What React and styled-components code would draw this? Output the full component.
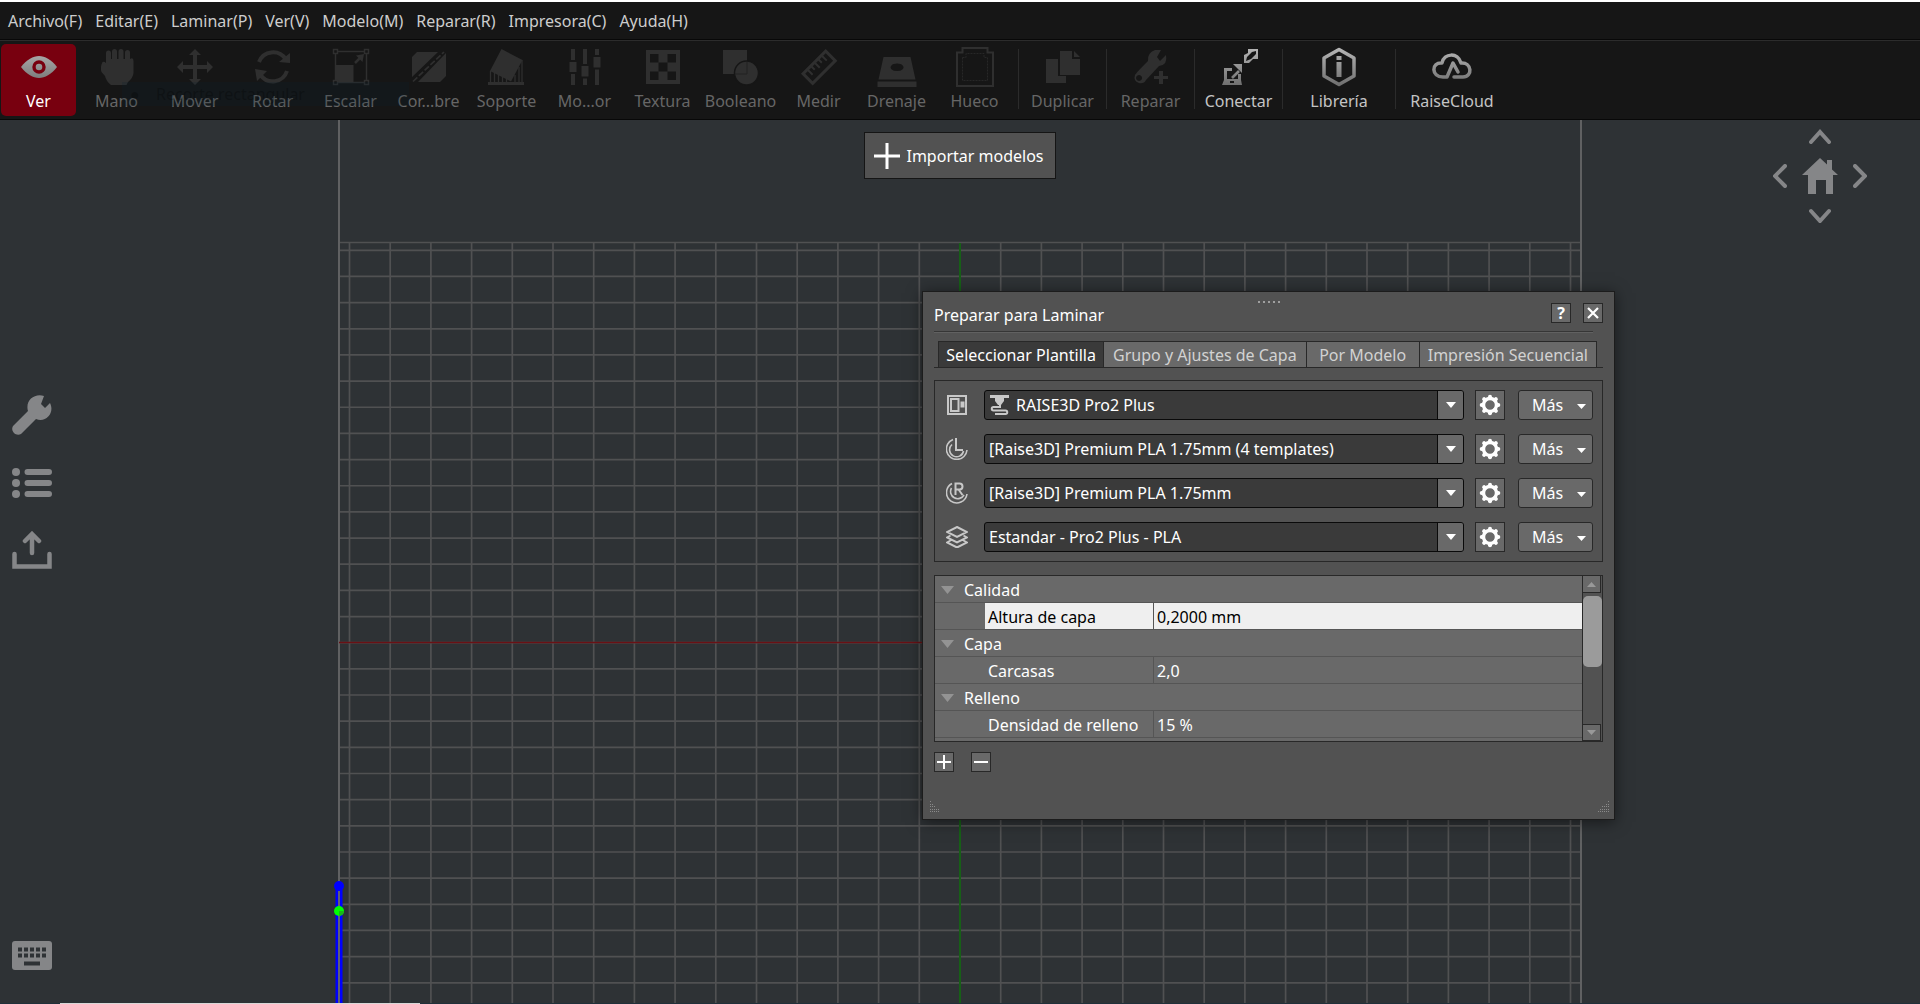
import React, { useState } from 'react';
import styled, { createGlobalStyle } from 'styled-components';

const MENU = ['Archivo(F)', 'Editar(E)', 'Laminar(P)', 'Ver(V)', 'Modelo(M)', 'Reparar(R)', 'Impresora(C)', 'Ayuda(H)'];

const TOOLS = [
  { id: 'view', label: 'Ver' },
  { id: 'pan', label: 'Mano', disabled: true },
  { id: 'move', label: 'Mover', disabled: true },
  { id: 'rotate', label: 'Rotar', disabled: true },
  { id: 'scale', label: 'Escalar', disabled: true },
  { id: 'cut', label: 'Cor...bre', disabled: true },
  { id: 'support', label: 'Soporte', disabled: true },
  { id: 'modifier', label: 'Mo...or', disabled: true },
  { id: 'texture', label: 'Textura', disabled: true },
  { id: 'boolean', label: 'Booleano', disabled: true },
  { id: 'measure', label: 'Medir', disabled: true },
  { id: 'drain', label: 'Drenaje', disabled: true },
  { id: 'hollow', label: 'Hueco', disabled: true },
  { id: 'duplicate', label: 'Duplicar', disabled: true, separated: true },
  { id: 'repair', label: 'Reparar', disabled: true, separated: true },
  { id: 'connect', label: 'Conectar', separated: true },
  { id: 'library', label: 'Librería', separated: true, wide: true },
  { id: 'cloud', label: 'RaiseCloud', separated: true, wide: true },
];

const TABS = [
  { label: 'Seleccionar Plantilla', width: 166 },
  { label: 'Grupo y Ajustes de Capa', width: 202 },
  { label: 'Por Modelo', width: 113 },
  { label: 'Impresión Secuencial', width: 177 },
];

const TEMPLATES = [
  { icon: 'printer', label: 'Impresora', value: 'RAISE3D Pro2 Plus' },
  { icon: 'left', label: 'Extrusor izquierdo', value: '[Raise3D] Premium PLA 1.75mm (4 templates)' },
  { icon: 'right', label: 'Extrusor derecho', value: '[Raise3D] Premium PLA 1.75mm' },
  { icon: 'layers', label: 'Plantilla', value: 'Estandar - Pro2 Plus - PLA' },
];

const SETTINGS = [
  { group: 'Calidad', name: 'Altura de capa', value: '0,2000 mm' },
  { group: 'Capa', name: 'Carcasas', value: '2,0' },
  { group: 'Relleno', name: 'Densidad de relleno', value: '15 %' },
];

// Toolbar icons are drawn around the origin in a 40x40 box
const toolIcons = {
  view: (
    <>
      <path d="M-18 0C-12-7.500-6-11 0-11S12-7.500 18 0C12 7.500 6 11 0 11S-12 7.500-18 0Z" />
      <circle r="5" fill="none" stroke="#78000f" strokeWidth="3.400" />
    </>
  ),
  pan: (
    <>
      <path d="M-8.500-14V0M-2.500-15.500V0M4-15.500V0M10.500-14.500V0" stroke="currentColor" strokeWidth="5" strokeLinecap="round" />
      <path d="M-11-8H13Q16.500-10 16.500-6V6Q16 11 11 15L9.500 18H-6Q-11 14-12 9L-15.500 5Q-17 0-14.500-5Q-13-6-11-4Z" />
    </>
  ),
  move: (
    <path d="M0-18L6-12H2V-2H12V-6L18 0L12 6V2H2V12H6L0 18L-6 12H-2V2H-12V6L-18 0L-12-6V-2H-2V-12H-6Z" />
  ),
  rotate: (
    <>
      <path d="M-14-5A15 15 0 0 1 12.500-8M14 4A15 15 0 0 1-12.500 8" fill="none" stroke="currentColor" strokeWidth="4" />
      <path d="M17-14V-4L6-5ZM-18 2L-6 4L-16 14Z" />
    </>
  ),
  scale: (
    <>
      <path d="M-15.500-15.500H15.500V15.500H-15.500Z" fill="none" stroke="currentColor" strokeWidth="1.500" />
      <path d="M-15-2H2.500V15H-15Z" />
      <path d="M4-4L11-11" stroke="currentColor" strokeWidth="2.500" />
      <path d="M13-13L11.500-5L5-11.500Z" />
      <path d="M-17.500-17.500h4v4h-4ZM13.500-17.500h4v4h-4ZM-17.500 13.500h4v4h-4ZM13.500 13.500h4v4h-4Z" fill="#161616" stroke="currentColor" strokeWidth="1.500" />
    </>
  ),
  cut: (
    <>
      <path d="M-12-15H9L-17 10V-10ZM17-9V9L11 15H-11L17-14Z" />
      <path d="M-16 14.500L15-15" stroke="currentColor" strokeWidth="1.700" strokeDasharray="6 2" />
    </>
  ),
  support: (
    <>
      <path d="M-5.500-18L15.500-7L4 14.500L-17 4Z" />
      <path d="M-19 15H17V18H-19Z" />
      <path d="M-16.500 4V16M-12.500 6V16M-8.500 8V16M-4.500 10V16M-.5 12V16M8 8V16M12 0V16M15-7V16" stroke="currentColor" strokeWidth="1.300" />
    </>
  ),
  modifier: (
    <path d="M-14-18h4V-7h-4ZM-15.500-5h7V5h-7ZM-14 7h4V18h-4ZM-2-18h4V-3h-4ZM-3.500-1h7V9.500h-7ZM-2 11.500h4V18h-4ZM10-18h4V-12h-4ZM8.500-10h7V.5h-7ZM10 2.500h4V18h-4Z" />
  ),
  texture: (
    <>
      <path d="M-17-17H17V17H-17Z" />
      <path d="M-13-13h8.500v8.500h-8.500ZM4.500-13h8.500v8.500h-8.500ZM-4.500-4.500h9v9h-9ZM-13 4.500h8.500v8.500h-8.500ZM4.500 4.500h8.500v8.500h-8.500Z" fill="#161616" />
    </>
  ),
  boolean: (
    <>
      <path d="M-18-17H6V7H-18Z" />
      <circle cx="5.500" cy="6" r="12" stroke="#161616" strokeWidth="1.500" />
      <path d="M6-5V7H-6" fill="none" stroke="#222" />
    </>
  ),
  measure: (
    <g transform="rotate(-45)" fill="none">
      <path d="M-16-6.500H16V7H-16Z" stroke="currentColor" strokeWidth="3" />
      <path d="M-10-6V1M-5-6V-1M0-6V1M5-6V-1M10-6V1" stroke="currentColor" strokeWidth="2" />
    </g>
  ),
  drain: (
    <>
      <path fillRule="evenodd" d="M-13.500-10H13.500L18.500 12.500H-18.500ZM0-3.500A6.500 3.800 0 1 0 .1-3.500Z" />
      <path d="M-19.500 14.500H19.500V20H-19.500Z" />
    </>
  ),
  hollow: (
    <g fill="none">
      <path d="M-18-14.500H-12.500V-19H12.500V-14.500H18V19H-18Z" stroke="currentColor" strokeWidth="2" />
      <path d="M-12.500-9.500H-9V-13.500H9V-9.500H12.500V13.500H-12.500Z" stroke="currentColor" strokeWidth=".7" strokeDasharray="2 1" />
    </g>
  ),
  duplicate: (
    <>
      <path d="M-17-8H-5V9H3V16H-17Z" />
      <path d="M-3-16H9V-8H17V8H-3ZM11-16L17-10H11Z" />
    </>
  ),
  repair: (
    <>
      <path fillRule="evenodd" d="M4-17L10-17L6-10L9-6L15-12Q17-2 8-1L-5 13Q-7 17-12 16Q-18 14-16 8Q-15 6-3-6Q-4-14 4-17ZM-12 8A3 3 0 1 0-11.900 8Z" />
      <path d="M8 4h4v5h5v3h-5v5H8v-5H3V9h5Z" />
    </>
  ),
  connect: (
    <>
      <path fillRule="evenodd" d="M-15 1H-7V4H-12V12H-1V7H2V13L3 18H-17L-15 13ZM-9 14V16H-5V14Z" />
      <path d="M-7 11L0 4" stroke="currentColor" strokeWidth="2.600" />
      <path d="M3-3V6L-6-3Z" />
      <path fillRule="evenodd" d="M9-18H19V-8H14L10-4H5V-12L9-14ZM17-16L13-15L8-10L7-6L12-8L17-13Z" />
    </>
  ),
  library: (
    <>
      <path d="M0-17.500L15-9V9L0 17.500L-15 9V-9Z" fill="none" stroke="currentColor" strokeWidth="3.500" strokeLinejoin="round" />
      <path d="M-2.500-11h5v4h-5ZM-2.500-5h5V10h-5Z" />
    </>
  ),
  cloud: (
    <path d="M-5 10H-9C-21 10-21-5-10-4C-8-14 6-15 9-4C20-5 21 10 11 10H2M-5 10L1-4L6 5" fill="none" stroke="currentColor" strokeWidth="3.500" strokeLinejoin="round" strokeLinecap="round" />
  ),
};

const slotIcons = {
  printer: (
    <>
      <path d="M2 2H20V20H2Z" />
      <path d="M5 5H12.500V17H5ZM15.500 8.500h2v4h-2Z" />
    </>
  ),
  left: (
    <>
      <path d="M7 1.500A10.300 10.300 0 1 0 21 12M6 6.500A7 7 0 1 0 17.500 13" strokeWidth="1.600" />
      <path d="M10 0V12H17" />
    </>
  ),
  right: (
    <>
      <path d="M6 1.500A10.300 10.300 0 1 0 21 12M5.500 6A7 7 0 1 0 18 13" strokeWidth="1.600" />
      <path d="M9.500 13V1.500H13.500A3 3 0 0 1 13.500 7.500H9.500M12.500 7.500L16.500 13" />
    </>
  ),
  layers: <path d="M11 1L21 6L11 11L1 6ZM4.500 9.500L1 11.500L11 16.500L21 11.500L17.500 9.500M4.500 14.500L1 16.500L11 21.500L21 16.500L17.500 14.500" />,
};

// Build plate seen from above: lines are laid out around its vertical axis
function BuildPlate() {
  const columns = Array.from({ length: 31 }, (_, i) => (i - 15) * 40.7);
  const rows = Array.from({ length: 40 }, (_, i) => 130.3 + i * 26.16);

  return (
    <Plate aria-hidden="true">
      <svg x="50%" overflow="visible">
        <g stroke="#505152" strokeWidth="1.700">
          {columns.map((x) => <path key={x} d={`M${x} 123V1600`} />)}
          {rows.map((y) => <path key={y} d={`M-621 ${y}H621`} />)}
          <path d="M-621 122.500H621" />
        </g>
        <path d="M-621 0V1600M621 0V1600" stroke="#606162" strokeWidth="2" />
        <path d="M0 123V1600" stroke="#175f17" strokeWidth="2" />
        <path d="M-621 522.500H0" stroke="#6a1014" strokeWidth="1.500" />
        <path d="M-621 766V1600" stroke="#00f" strokeWidth="7" />
        <path d="M-621 771V1600" stroke="#606175" strokeWidth="2" />
        <circle cx="-621" cy="766" r="5" fill="#00f" />
        <circle cx="-621" cy="791" r="5" fill="#0f0" />
        <path d="M-621 791h5a5 5 0 0 1-5 5Z" fill="#18b818" />
      </svg>
    </Plate>
  );
}

function Gear() {
  return (
    <svg width="22" height="22" viewBox="-11 -11 22 22" fill="none" stroke="#fff" aria-hidden="true">
      <circle r="6.500" strokeWidth="3.400" />
      {[0, 45, 90, 135, 180, 225, 270, 315].map((a) => (
        <path key={a} d="M0-7V-8.300" strokeWidth="4" strokeLinecap="round" transform={`rotate(${a})`} />
      ))}
    </svg>
  );
}

function Triangle({ width = 10, height = 6, up }) {
  return (
    <svg width={width} height={height} viewBox="0 0 10 6" preserveAspectRatio="none" fill="currentColor" aria-hidden="true">
      <path d={up ? 'M0 6L5 0L10 6Z' : 'M0 0H10L5 6Z'} />
    </svg>
  );
}

function App() {
  const [activeTool, setActiveTool] = useState('view');
  const [activeTab, setActiveTab] = useState(TABS[0].label);
  const [open, setOpen] = useState(true);

  return (
    <Window>
      <GlobalStyle />
      <svg width="0" height="0" aria-hidden="true">
        <linearGradient id="metal" gradientUnits="userSpaceOnUse" x1="0" x2="0" y1="-18" y2="18">
          <stop offset="0" stopColor="#b4b4b4" />
          <stop offset="1" stopColor="#707070" />
        </linearGradient>
      </svg>
      <MenuBar>
        {MENU.map((item) => <MenuButton key={item} type="button">{item}</MenuButton>)}
      </MenuBar>
      <Toolbar>
        {TOOLS.map((tool) => (
          <React.Fragment key={tool.id}>
            {tool.separated && <Separator />}
            <ToolButton
              type="button"
              disabled={tool.disabled}
              $wide={tool.wide}
              $active={activeTool === tool.id}
              onClick={() => setActiveTool(tool.id)}
            >
              <svg width="40" height="40" viewBox="-20 -20 40 40" aria-hidden="true">{toolIcons[tool.id]}</svg>
              {tool.label}
            </ToolButton>
          </React.Fragment>
        ))}
        <Ghost>
          <GhostMark>●</GhostMark>
          Recorte rectangular
        </Ghost>
      </Toolbar>

      <Viewport>
        <BuildPlate />
        <SideTools>
          <IconButton type="button" aria-label="Ajustes">
            <svg width="40" height="40" viewBox="0 0 40 40">
              <path d="M38 8L33 13L29 9L32 1C22-2 13 6 16 16L1 31C-2 36 4 42 9 39L24 24C34 28 43 18 38 8Z" />
            </svg>
          </IconButton>
          <IconButton type="button" aria-label="Lista de modelos">
            <svg width="40" height="30" viewBox="0 0 40 30">
              <circle cx="4" cy="4" r="4" /><circle cx="4" cy="15" r="4" /><circle cx="4" cy="26" r="4" />
              <path d="M15.500 4H37M15.500 15H37M15.500 26H37" stroke="currentColor" strokeWidth="6" strokeLinecap="round" />
            </svg>
          </IconButton>
          <IconButton type="button" aria-label="Exportar">
            <svg width="40" height="38" viewBox="0 0 40 38" fill="none" stroke="currentColor" strokeWidth="4.500" strokeLinecap="round">
              <path d="M20 22V4M13 10L20 3L27 10M2.500 23V35.500H37.500V23" />
            </svg>
          </IconButton>
          <KeyboardButton type="button" aria-label="Atajos de teclado">
            <svg width="40" height="29" viewBox="0 0 40 29">
              <rect width="40" height="29" rx="3" />
              <path d="M6 8.500H35M6 14.500H35" stroke="#2e3235" strokeWidth="4" strokeDasharray="4 2" />
              <path d="M12 22.500H28" stroke="#2e3235" strokeWidth="4" />
            </svg>
          </KeyboardButton>
        </SideTools>

        <ImportButton type="button">
          <svg width="26" height="26" viewBox="0 0 26 26" stroke="#fff" strokeWidth="3" aria-hidden="true">
            <path d="M13 0V26M0 13H26" />
          </svg>
          Importar modelos
        </ImportButton>

        <ViewNav>
          <NavButton type="button" aria-label="Arriba" $area="up">
            <svg width="22" height="15" viewBox="0 0 22 15"><Chevron d="M2 13L11 3L20 13" /></svg>
          </NavButton>
          <NavButton type="button" aria-label="Izquierda" $area="left">
            <svg width="14" height="24" viewBox="0 0 14 24"><Chevron d="M12 2L2 12L12 22" /></svg>
          </NavButton>
          <NavButton type="button" aria-label="Inicio" $area="home">
            <svg width="36" height="36" viewBox="0 0 36 36">
              <path d="M18 0L25 6.500V2H30V11.500L36 17H31V36H24V22H14V36H6V17H0Z" />
            </svg>
          </NavButton>
          <NavButton type="button" aria-label="Derecha" $area="right">
            <svg width="14" height="24" viewBox="0 0 14 24"><Chevron d="M2 2L12 12L2 22" /></svg>
          </NavButton>
          <NavButton type="button" aria-label="Abajo" $area="down">
            <svg width="22" height="15" viewBox="0 0 22 15"><Chevron d="M2 3L11 13L20 3" /></svg>
          </NavButton>
        </ViewNav>

        {open && (
          <Dialog role="dialog" aria-label="Preparar para Laminar">
            <DragDots aria-hidden="true">
              <i /><i /><i /><i /><i />
            </DragDots>
            <TitleRow>
              <Title>Preparar para Laminar</Title>
              <SquareButton type="button" aria-label="Ayuda">?</SquareButton>
              <SquareButton type="button" aria-label="Cerrar" onClick={() => setOpen(false)}>
                <svg width="12" height="12" viewBox="0 0 12 12" stroke="#fff" strokeWidth="2.200">
                  <path d="M1 1L11 11M11 1L1 11" />
                </svg>
              </SquareButton>
            </TitleRow>
            <Rule />
            <Tabs role="tablist">
              {TABS.map((tab) => (
                <Tab
                  key={tab.label}
                  type="button"
                  role="tab"
                  $basis={tab.width}
                  aria-selected={activeTab === tab.label}
                  $active={activeTab === tab.label}
                  onClick={() => setActiveTab(tab.label)}
                >
                  {tab.label}
                </Tab>
              ))}
            </Tabs>

            <Templates>
              {TEMPLATES.map((row) => (
                <TemplateRow key={row.icon}>
                  <SlotLabel htmlFor={row.icon} aria-label={row.label}>
                    <svg width="22" height="22" viewBox="0 0 22 22" fill="none" stroke="#c8c8c8" strokeWidth="2">
                      {slotIcons[row.icon]}
                    </svg>
                  </SlotLabel>
                  <SelectBox>
                    {row.icon === 'printer' && (
                      <svg width="19" height="20" viewBox="0 0 19 20" fill="#c8c8c8" aria-hidden="true">
                        <path d="M0 0H19V3H14V6L11 10H8L5 6V3H0Z" />
                        <path d="M10 10V12H3.500A1.500 1.500 0 0 0 3.500 15.500H15.500A1.500 1.500 0 0 1 15.500 19H5" fill="none" stroke="#c8c8c8" strokeWidth="2" />
                      </svg>
                    )}
                    <Select id={row.icon} defaultValue={row.value}>
                      <option>{row.value}</option>
                    </Select>
                    <SelectArrow><Triangle /></SelectArrow>
                  </SelectBox>
                  <GearButton type="button" aria-label={`Editar ${row.label}`}><Gear /></GearButton>
                  <MoreButton type="button">Más <Triangle width={9} height={5} /></MoreButton>
                </TemplateRow>
              ))}
            </Templates>

            <SettingsBox>
              <SettingsScroll>
                <SettingsTable>
                  <colgroup>
                    <col width="50" />
                    <col width="169" />
                    <col />
                  </colgroup>
                  {SETTINGS.map((s, i) => (
                    <tbody key={s.group}>
                      <tr>
                        <ArrowCell><Triangle width={13} height={8} /></ArrowCell>
                        <GroupCell colSpan="2" scope="rowgroup"><span>{s.group}</span></GroupCell>
                      </tr>
                      <SettingRow $selected={i === 0}>
                        <td />
                        <td>{s.name}</td>
                        <td>{s.value}</td>
                      </SettingRow>
                    </tbody>
                  ))}
                </SettingsTable>
              </SettingsScroll>
              <ScrollBar>
                <ScrollButton type="button" aria-label="Subir"><Triangle width={9} height={5} up /></ScrollButton>
                <Thumb />
                <ScrollButton type="button" aria-label="Bajar" $bottom><Triangle width={9} height={5} /></ScrollButton>
              </ScrollBar>
            </SettingsBox>

            <Actions>
              <SquareButton type="button" aria-label="Añadir">
                <svg width="14" height="14" viewBox="0 0 14 14" stroke="#fff" strokeWidth="2"><path d="M7 0V14M0 7H14" /></svg>
              </SquareButton>
              <SquareButton type="button" aria-label="Quitar">
                <svg width="14" height="14" viewBox="0 0 14 14" stroke="#fff" strokeWidth="2"><path d="M0 7H14" /></svg>
              </SquareButton>
            </Actions>
            <Grips>
              <svg width="12" height="12" viewBox="0 0 12 12" stroke="#8a8a8a" strokeDasharray="1 1">
                <path d="M2 .5H4M2 3.500H5M2 5.500H8M2 8.500H11M2 10.500H12" />
              </svg>
              <svg width="12" height="12" viewBox="0 0 12 12" stroke="#8a8a8a" strokeDasharray="1 1">
                <path d="M12 .5H10M12 3.500H8M12 5.500H5M12 8.500H3M12 10.500H0" />
              </svg>
            </Grips>
          </Dialog>
        )}
      </Viewport>
      <Taskbar><i /></Taskbar>
    </Window>
  );
}

export default App;

// Styled Components

const GlobalStyle = createGlobalStyle`
  *, *::before, *::after {
    box-sizing: border-box;
  }

  body {
    margin: 0;
    background: #2e3235;
  }

  body, button, select {
    font-family: 'Noto Sans', 'Open Sans', sans-serif;
    font-size: 16px;
    line-height: 22px;
  }

  button {
    padding: 0;
    cursor: pointer;
  }

  svg {
    display: block;
    flex: none;
  }
`;

const Window = styled.div`
  display: flex;
  flex-direction: column;
  height: 100vh;
  overflow: hidden;
  border-top: 2px solid #fff;
  color: #fff;
`;

const MenuBar = styled.nav`
  display: flex;
  align-items: center;
  gap: 13px;
  height: 38px;
  flex: none;
  padding: 0 8px;
  background: #161616;
  border-bottom: 1px solid #080808;
`;

const MenuButton = styled.button`
  border: none;
  background: none;
  color: #cdcdcd;
`;

const Toolbar = styled.div`
  position: relative;
  display: flex;
  gap: 3px;
  height: 80px;
  flex: none;
  padding: 3px 1px;
  background: #161616;
  border-top: 1px solid #2c2c2c;
  border-bottom: 1px solid #080808;
`;

const ToolButton = styled.button`
  display: flex;
  flex-direction: column;
  align-items: center;
  gap: 3px;
  width: ${(props) => (props.$wide ? '100px' : '75px')};
  height: 72px;
  padding-top: 3px;
  border: none;
  border-radius: 5px;
  background: ${(props) => (props.$active ? '#78000f' : 'transparent')};
  color: ${(props) => (props.$active ? '#fff' : '#c4c4c4')};

  svg {
    overflow: visible;
    fill: url(#metal);
  }

  svg [stroke='currentColor'] {
    stroke: url(#metal);
  }

  &:disabled {
    color: #666;
    cursor: default;

    svg {
      fill: #2f2f2f;
    }

    svg [stroke='currentColor'] {
      stroke: #2f2f2f;
    }
  }
`;

const Separator = styled.div`
  width: 1px;
  height: 60px;
  margin: 5px 3px 0;
  background: #2b2b2b;
`;

// Fading menu entry left over the toolbar
const Ghost = styled.div`
  position: absolute;
  left: 122px;
  top: 41px;
  display: flex;
  align-items: center;
  width: 287px;
  height: 24px;
  background: rgba(10, 35, 50, 0.2);
  color: rgba(0, 0, 0, 0.25);
  pointer-events: none;
`;

const GhostMark = styled.span`
  width: 34px;
  padding-left: 8px;
`;

const Viewport = styled.main`
  position: relative;
  display: grid;
  grid-template-columns: 1fr auto 1fr;
  flex: 1;
  min-height: 0;
  background: #2e3235;
`;

const Plate = styled.svg`
  position: absolute;
  width: 100%;
  height: 100%;
`;

const SideTools = styled.div`
  position: relative;
  display: flex;
  flex-direction: column;
  align-items: flex-start;
  gap: 33px;
  padding: 275px 12px 33px;
`;

const IconButton = styled.button`
  border: none;
  background: none;
  color: #858688;
  fill: currentColor;
`;

const KeyboardButton = styled(IconButton)`
  margin-top: auto;
`;

const ImportButton = styled.button`
  position: relative;
  display: flex;
  align-items: center;
  gap: 6px;
  height: 47px;
  margin-top: 12px;
  padding: 0 11px 0 9px;
  border: 1px solid #151515;
  background: #525252;
  color: #fff;
`;

const ViewNav = styled.div`
  position: relative;
  justify-self: end;
  align-self: start;
  display: grid;
  grid-template-columns: 14px 66px 14px;
  grid-template-rows: 15px 64px 15px;
  grid-template-areas: '. up .' 'left home right' '. down .';
  margin: 9px 53px 0 0;
`;

const NavButton = styled(IconButton)`
  grid-area: ${(props) => props.$area};
  display: flex;
  align-items: center;
  justify-content: center;
`;

const Chevron = styled.path`
  fill: none;
  stroke: currentColor;
  stroke-width: 4px;
  stroke-linecap: round;
`;

const Dialog = styled.section`
  position: absolute;
  top: 171px;
  right: 305px;
  width: 693px;
  padding: 9px 11px 6px;
  border: 1px solid #1c1c1c;
  background: #525252;
  box-shadow: 0 2px 14px rgba(0, 0, 0, 0.5);
`;

const DragDots = styled.div`
  display: flex;
  justify-content: center;
  gap: 3px;
  height: 2px;
  margin-bottom: -1px;

  i {
    width: 2px;
    background: #a0a0a0;
  }
`;

const TitleRow = styled.header`
  display: flex;
  align-items: center;
  gap: 12px;
  height: 22px;
`;

const Title = styled.h1`
  flex: 1;
  margin: 3px 0 0;
  font-size: 16px;
  font-weight: 400;
`;

const SquareButton = styled.button`
  display: flex;
  align-items: center;
  justify-content: center;
  width: 20px;
  height: 20px;
  border: 1px solid #282828;
  background: #696969;
  color: #fff;
  font-weight: 700;
  line-height: 18px;
`;

const Rule = styled.div`
  height: 2px;
  margin: 7px 10px 8px 0;
  border-top: 1px solid #363636;
  border-bottom: 1px solid #616161;
`;

const Tabs = styled.div`
  display: flex;
  padding: 0 6px 0 4px;
  border-bottom: 1px solid #282828;
`;

const Tab = styled.button`
  flex: 1 1 ${(props) => props.$basis}px;
  height: 26px;
  border: 1px solid #282828;
  border-bottom: none;
  background: ${(props) => (props.$active ? '#3a3a3a' : '#696969')};
  color: ${(props) => (props.$active ? '#fff' : '#d2d2d2')};
  white-space: nowrap;

  & + & {
    border-left: none;
  }
`;

const Templates = styled.div`
  display: flex;
  flex-direction: column;
  gap: 14px;
  margin-top: 12px;
  padding: 9px 9px 9px 11px;
  border: 1px solid #282828;
`;

const TemplateRow = styled.div`
  display: flex;
  align-items: center;
`;

const SlotLabel = styled.label`
  margin-right: 16px;
`;

const SelectBox = styled.div`
  display: flex;
  flex: 1;
  align-items: center;
  height: 30px;
  border: 1px solid #0a0a0a;
  border-radius: 3px;
  background: #3a3a3a;
  overflow: hidden;

  & > svg {
    margin: 0 3px 0 5px;
  }
`;

const Select = styled.select`
  flex: 1;
  height: 28px;
  padding: 0 4px;
  border: none;
  background: none;
  color: #fff;
  appearance: none;
`;

const SelectArrow = styled.span`
  display: flex;
  align-items: center;
  justify-content: center;
  width: 26px;
  height: 28px;
  border-left: 1px solid #0a0a0a;
  background: #696969;
  pointer-events: none;
`;

const GearButton = styled(SquareButton)`
  width: 30px;
  height: 30px;
  margin: 0 13px 0 11px;
`;

const MoreButton = styled.button`
  display: flex;
  align-items: center;
  justify-content: space-between;
  width: 75px;
  height: 30px;
  padding: 0 6px 0 13px;
  border: 1px solid #282828;
  border-radius: 3px;
  background: #696969;
  color: #fff;

  svg {
    margin-top: 3px;
  }
`;

const SettingsBox = styled.div`
  display: flex;
  height: 167px;
  margin-top: 13px;
  border: 1px solid #282828;
  background: #696969;
`;

const SettingsScroll = styled.div`
  flex: 1;
  overflow: hidden;
`;

const SettingsTable = styled.table`
  width: 100%;
  table-layout: fixed;
  border-collapse: separate;
  border-spacing: 0;

  td, th {
    height: 27px;
    padding: 1px 3px 0;
    border-bottom: 1px solid #555;
    text-align: left;
    font-weight: 400;
  }
`;

const ArrowCell = styled.td`
  color: #939393;

  svg {
    margin-left: 3px;
  }
`;

const GroupCell = styled.th`
  overflow: visible;

  span {
    display: block;
    margin-left: -24px;
  }
`;

const SettingRow = styled.tr`
  td:nth-child(2) {
    border-right: 1px solid #555;
  }

  td:nth-child(n + 2) {
    background: ${(props) => (props.$selected ? '#efefef' : 'transparent')};
    color: ${(props) => (props.$selected ? '#000' : '#fff')};
  }
`;

const ScrollBar = styled.div`
  display: flex;
  flex-direction: column;
  width: 20px;
  border-left: 1px solid #282828;
  background: #525252;
`;

const ScrollButton = styled.button`
  display: flex;
  align-items: center;
  justify-content: center;
  width: 18px;
  height: 17px;
  margin-top: ${(props) => (props.$bottom ? 'auto' : '0')};
  border: 1px solid #282828;
  border-width: ${(props) => (props.$bottom ? '1px 1px 1px 0' : '0 1px 1px 0')};
  background: #696969;
  color: #999;
`;

const Thumb = styled.div`
  height: 71px;
  margin-top: 3px;
  border-radius: 5px;
  background: #9b9b9b;
`;

const Actions = styled.div`
  display: flex;
  gap: 17px;
  margin-top: 10px;
`;

const Grips = styled.div`
  display: flex;
  justify-content: space-between;
  margin: 29px -6px 0;
`;

const Taskbar = styled.div`
  height: 1px;
  flex: none;
  padding-left: 60px;
  background: #20303a;

  i {
    display: block;
    width: 360px;
    height: 1px;
    background: #d8d8d8;
  }
`;
